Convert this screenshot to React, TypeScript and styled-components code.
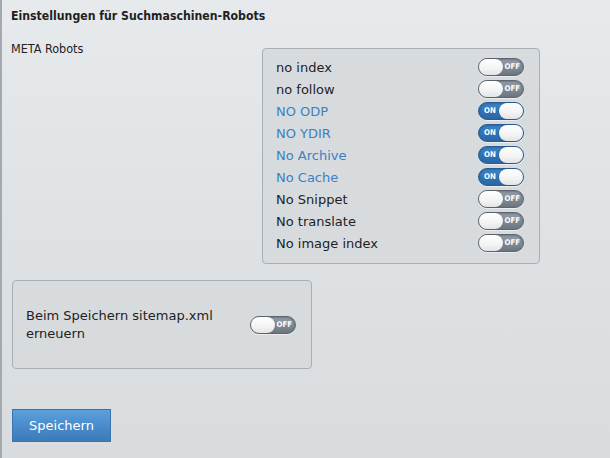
import React from "react";
import styled, { createGlobalStyle } from "styled-components";

const Global = createGlobalStyle`
  html, body { margin: 0; padding: 0; }
  body {
    font-family: "DejaVu Sans", Verdana, sans-serif;
    background: #dadde0;
  }
`;

const Page = styled.div`
  box-sizing: border-box;
  width: 610px;
  height: 458px;
  overflow: hidden;
  border-left: 2px solid #a3a9af;
  background: linear-gradient(to bottom, #e7eaed 0%, #dfe2e5 50%, #d9dcdf 100%);
  padding: 8px 0 0 9px;
  color: #222;
`;

const Title = styled.h1`
  margin: 0;
  font-family: "DejaVu Sans Condensed", "DejaVu Sans", Verdana, sans-serif;
  font-stretch: condensed;
  font-size: 12.2px;
  font-weight: bold;
  line-height: 17px;
  color: #1f1f1f;
`;

const SectionRow = styled.div`
  display: flex;
  align-items: flex-start;
  margin-top: 15px;
`;

const SectionLabel = styled.div`
  flex: 0 0 251px;
  margin-top: 1px;
  font-family: "DejaVu Sans Condensed", "DejaVu Sans", Verdana, sans-serif;
  font-stretch: condensed;
  font-size: 12.5px;
  line-height: 16px;
  color: #222;
`;

const Panel = styled.div`
  box-sizing: border-box;
  border: 1px solid #a9afb5;
  border-radius: 4px;
  background: #d8dbde;
`;

const RobotsPanel = styled(Panel)`
  margin-top: 8px;
  width: 278px;
  padding: 7px 15px 9px 13px;
`;

const OptionRow = styled.div`
  display: flex;
  align-items: center;
  justify-content: space-between;
  height: 22px;
`;

const OptionLabel = styled.span<{ $on: boolean }>`
  font-size: 13px;
  color: ${(p) => (p.$on ? "#3b80c3" : "#1e1e1e")};
`;

const Track = styled.div<{ $on: boolean }>`
  position: relative;
  box-sizing: border-box;
  width: 46px;
  height: 18px;
  border-radius: 9px;
  border: 1px solid ${(p) => (p.$on ? "#2a5d92" : "#5e6771")};
  background: ${(p) =>
    p.$on
      ? "linear-gradient(to bottom, #3f87cc 0%, #2f72b4 55%, #2c67a3 100%)"
      : "linear-gradient(to bottom, #96a0aa 0%, #7d8893 55%, #6c7681 100%)"};
  box-shadow: inset 0 1px 2px rgba(0, 0, 0, 0.25), 0 1px 0 rgba(255, 255, 255, 0.5);
  flex-shrink: 0;
`;

const Knob = styled.div<{ $on: boolean }>`
  position: absolute;
  top: 0;
  ${(p) => (p.$on ? "right: 0;" : "left: 0;")}
  width: 24px;
  height: 16px;
  border-radius: 8px;
  background: linear-gradient(to bottom, #ffffff 0%, #f3f3f3 60%, #e2e4e6 100%);
  box-shadow: 0 0 1px rgba(0, 0, 0, 0.4);
`;

const ToggleText = styled.span<{ $on: boolean }>`
  position: absolute;
  top: 0;
  ${(p) => (p.$on ? "left: 5px;" : "right: 3px;")}
  line-height: 16px;
  font-family: "DejaVu Sans Condensed", "DejaVu Sans", Verdana, sans-serif;
  font-stretch: condensed;
  font-size: 7.8px;
  font-weight: bold;
  color: #ffffff;
`;

function Toggle({ on }: { on: boolean }) {
  return (
    <Track $on={on}>
      <ToggleText $on={on}>{on ? "ON" : "OFF"}</ToggleText>
      <Knob $on={on} />
    </Track>
  );
}

const SitemapPanel = styled(Panel)`
  margin-top: 16px;
  margin-left: 1px;
  width: 300px;
  height: 89px;
  padding: 0 13px;
  display: flex;
  align-items: center;
`;

const SitemapText = styled.div`
  flex: 0 0 224px;
  font-size: 13px;
  line-height: 18px;
  color: #222;
`;

const SaveButton = styled.button`
  display: block;
  margin: 40px 0 0 1px;
  box-sizing: border-box;
  width: 99px;
  height: 33px;
  padding: 0;
  border: 1px solid #3b74ad;
  border-radius: 0;
  background: linear-gradient(to bottom, #5ba0dc 0%, #4a8ccc 50%, #3e79b8 100%);
  color: #ffffff;
  font-family: "DejaVu Sans", Verdana, sans-serif;
  font-size: 13px;
  cursor: pointer;
`;

const options: { label: string; on: boolean }[] = [
  { label: "no index", on: false },
  { label: "no follow", on: false },
  { label: "NO ODP", on: true },
  { label: "NO YDIR", on: true },
  { label: "No Archive", on: true },
  { label: "No Cache", on: true },
  { label: "No Snippet", on: false },
  { label: "No translate", on: false },
  { label: "No image index", on: false },
];

export default function App() {
  return (
    <>
      <Global />
      <Page>
        <Title>Einstellungen für Suchmaschinen-Robots</Title>
        <SectionRow>
          <SectionLabel>META Robots</SectionLabel>
          <RobotsPanel>
            {options.map((o) => (
              <OptionRow key={o.label}>
                <OptionLabel $on={o.on}>{o.label}</OptionLabel>
                <Toggle on={o.on} />
              </OptionRow>
            ))}
          </RobotsPanel>
        </SectionRow>
        <SitemapPanel>
          <SitemapText>Beim Speichern sitemap.xml erneuern</SitemapText>
          <Toggle on={false} />
        </SitemapPanel>
        <SaveButton>Speichern</SaveButton>
      </Page>
    </>
  );
}
